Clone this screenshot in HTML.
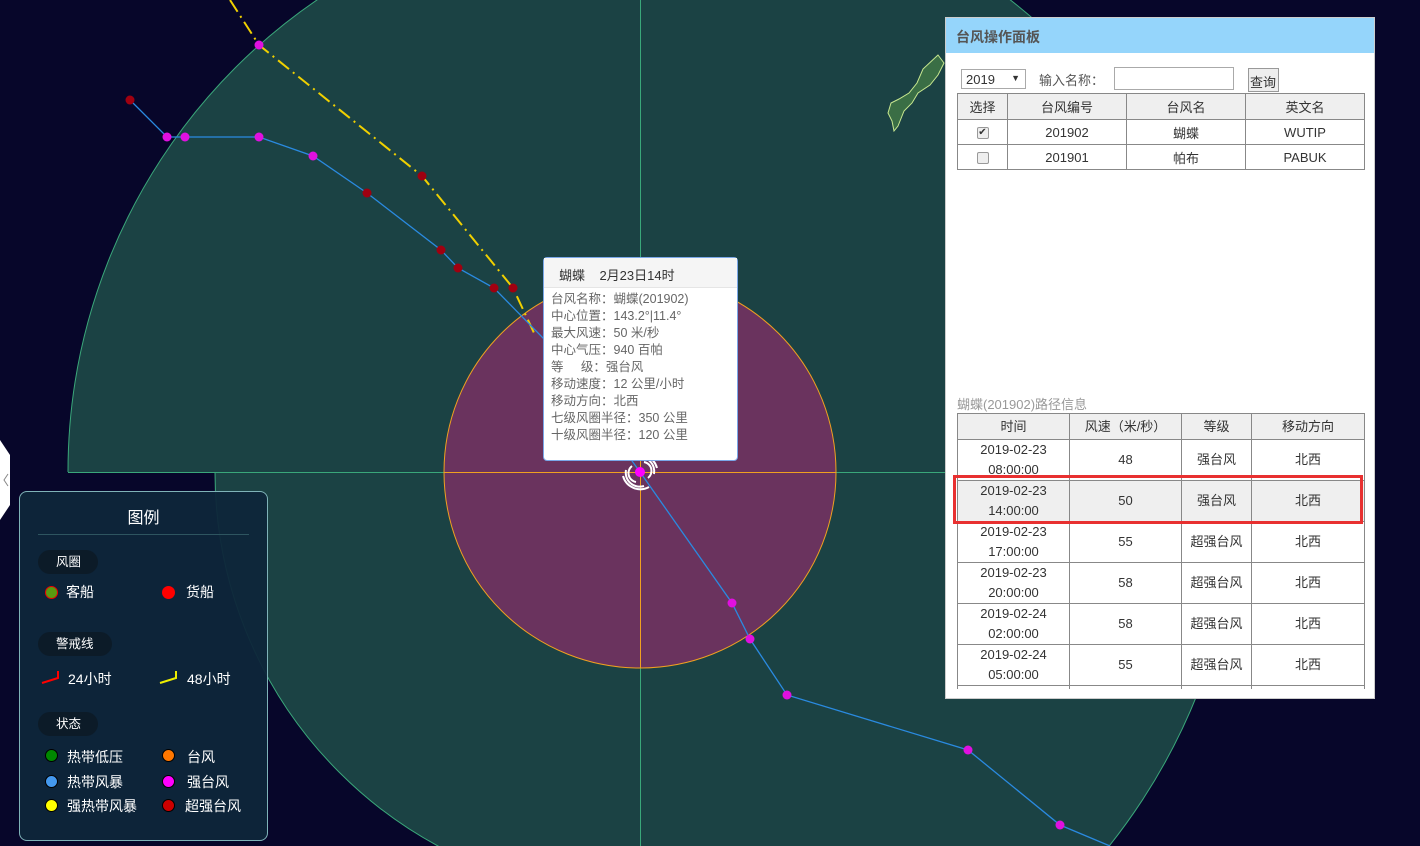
<!DOCTYPE html>
<html><head><meta charset="utf-8"><style>
*{margin:0;padding:0;box-sizing:border-box}
html,body{width:1420px;height:846px;overflow:hidden}
body{background:#07062a;font-family:"Liberation Sans","Noto Sans CJK SC",sans-serif;position:relative}
svg.map{position:absolute;left:0;top:0}
.tip{position:absolute;left:543px;top:257px;width:195px;height:204px;background:#fff;border:1px solid #7aa7e8;border-radius:4px;font-size:12.5px;color:#666}
.tip .h{height:30px;background:#f5f5f5;border-bottom:1px solid #e5e5e5;padding:7px 0 0 15px;color:#333;font-size:13px}
.tip .b{padding:3px 0 0 7px;line-height:17px}
.legend{position:absolute;left:19px;top:491px;width:249px;height:350px;border:1px solid #7fb3b8;border-radius:8px;background:rgba(14,38,58,.95);color:#fff;font-size:14px}
.legend .t{text-align:center;font-size:16px;margin-top:12px;padding-bottom:6px;border-bottom:1px solid #2e5560;margin-left:18px;margin-right:18px}
.pill{position:absolute;left:18px;height:24px;border-radius:12px;background:#0c1b28;font-size:12.5px;line-height:24px;padding-left:18px}
.it{position:absolute;font-size:14px;line-height:16px}
.dot{position:absolute;width:13px;height:13px;border-radius:50%;border:1px solid #000}
.panel{position:absolute;left:945px;top:17px;width:430px;height:682px;background:#fff;border:1px solid #ccc;overflow:hidden}
.panel .hd{height:35px;background:#95d5fb;color:#555;font-weight:bold;font-size:14px;padding:9px 0 0 10px}
table{border-collapse:collapse;position:absolute;left:11px;font-size:13px;color:#333;text-align:center}
td,th{border:1px solid #888;font-weight:normal}
th{background:#efefef;height:26px}
.cb{display:inline-block;width:12px;height:12px;border:1px solid #999;border-radius:2px;background:#eee;vertical-align:middle;font-size:10px;line-height:10px}
</style></head><body>
<svg class="map" width="1420" height="846">
<defs><clipPath id="ul"><rect x="0" y="0" width="640" height="472"/></clipPath>
<clipPath id="ll"><rect x="0" y="472" width="640" height="400"/></clipPath>
<clipPath id="r"><rect x="640" y="0" width="800" height="846"/></clipPath></defs>
<circle cx="640" cy="472" r="572" fill="#1b4244" stroke="#3aa77a" clip-path="url(#ul)"/>
<circle cx="640" cy="472" r="425" fill="#1b4244" stroke="#3aa77a" clip-path="url(#ll)"/>
<circle cx="640" cy="472" r="600" fill="#1b4244" stroke="#3aa77a" clip-path="url(#r)"/>
<line x1="68" y1="472.5" x2="1000" y2="472.5" stroke="#3aa77a"/>
<line x1="640.5" y1="0" x2="640.5" y2="846" stroke="#3aa77a"/>
<circle cx="640" cy="472" r="196" fill="#6a335e" stroke="#f0a020"/>
<line x1="444" y1="472.5" x2="836" y2="472.5" stroke="#f0a020"/>
<line x1="640.5" y1="276" x2="640.5" y2="668" stroke="#f0a020"/>
<path d="M938 55 l6 8 l-6 12 l-8 10 l-12 8 l-6 10 l-8 8 l-6 15 l-4 5 l-2 -10 l-4 -8 l3 -10 l8 -4 l10 -6 l8 -10 l6 -14z" fill="#3a6e45" stroke="#c8e890" stroke-width="1"/>
<polyline points="230,0 259,45 422,176 513,288 535,335" fill="none" stroke="#f0d000" stroke-width="2" stroke-dasharray="14,5,2,5"/>
<polyline points="130,100 167,137 185,137 259,137 313,156 367,193 441,250 458,268 494,288 545,340 640,472 732,603 750,639 787,695 968,750 1060,825 1110,846" fill="none" stroke="#2a8ae0" stroke-width="1.3"/>
<g fill="#a00010"><circle cx="130" cy="100" r="4.5"/><circle cx="367" cy="193" r="4.5"/><circle cx="441" cy="250" r="4.5"/><circle cx="458" cy="268" r="4.5"/><circle cx="494" cy="288" r="4.5"/><circle cx="422" cy="176" r="4.5"/><circle cx="513" cy="288" r="4.5"/></g>
<g fill="#e010e0"><circle cx="167" cy="137" r="4.5"/><circle cx="185" cy="137" r="4.5"/><circle cx="259" cy="137" r="4.5"/><circle cx="313" cy="156" r="4.5"/><circle cx="259" cy="45" r="4.5"/><circle cx="732" cy="603" r="4.5"/><circle cx="750" cy="639" r="4.5"/><circle cx="787" cy="695" r="4.5"/><circle cx="968" cy="750" r="4.5"/><circle cx="1060" cy="825" r="4.5"/></g>
<g fill="none" stroke="#fff" stroke-width="2"><path d="M632 466 a9 9 0 0 0 4 16"/><path d="M648 478 a9 9 0 0 0 -4 -16"/><path d="M626 470 a14 14 0 0 0 18 16"/><path d="M654 474 a14 14 0 0 0 -18 -16"/><path d="M623 476 a18 18 0 0 0 26 11"/><path d="M657 468 a18 18 0 0 0 -26 -11"/></g>
<circle cx="640" cy="472" r="5" fill="#f0f"/>
<path d="M0 440 l10 15 v50 l-10 15z" fill="#fff"/>
<path d="M8 474 l-4 6 l4 6" stroke="#888" fill="none"/>
</svg>
<div class="tip"><div class="h">蝴蝶&nbsp;&nbsp;&nbsp;&nbsp;2月23日14时</div><div class="b">台风名称：蝴蝶(201902)<br>中心位置：143.2°|11.4°<br>最大风速：50 米/秒<br>中心气压：940 百帕<br>等&nbsp;&nbsp;&nbsp;&nbsp;&nbsp;级：强台风<br>移动速度：12 公里/小时<br>移动方向：北西<br>七级风圈半径：350 公里<br>十级风圈半径：120 公里</div></div>
<div class="legend"><div class="t">图例</div>
<div class="pill" style="top:58px;width:60px">风圈</div>
<div class="dot" style="left:25px;top:94px;background:#5a9a10;border-color:#e00"></div><div class="it" style="left:46px;top:92px">客船</div>
<div class="dot" style="left:142px;top:94px;background:#f00;border-color:#f00"></div><div class="it" style="left:166px;top:92px">货船</div>
<div class="pill" style="top:140px;width:74px">警戒线</div>
<svg style="position:absolute;left:21px;top:178px" width="20" height="16"><polyline points="1,13 17,8 17,1" fill="none" stroke="#f00" stroke-width="2"/></svg><div class="it" style="left:48px;top:179px">24小时</div>
<svg style="position:absolute;left:139px;top:178px" width="20" height="16"><polyline points="1,13 17,8 17,1" fill="none" stroke="#ee0" stroke-width="2"/></svg><div class="it" style="left:167px;top:179px">48小时</div>
<div class="pill" style="top:220px;width:60px">状态</div>
<div class="dot" style="left:25px;top:257px;background:#080"></div><div class="it" style="left:47px;top:257px">热带低压</div>
<div class="dot" style="left:142px;top:257px;background:#f70"></div><div class="it" style="left:167px;top:257px">台风</div>
<div class="dot" style="left:25px;top:283px;background:#49e"></div><div class="it" style="left:47px;top:282px">热带风暴</div>
<div class="dot" style="left:142px;top:283px;background:#f0f"></div><div class="it" style="left:167px;top:282px">强台风</div>
<div class="dot" style="left:25px;top:307px;background:#ff0"></div><div class="it" style="left:47px;top:306px">强热带风暴</div>
<div class="dot" style="left:142px;top:307px;background:#c00"></div><div class="it" style="left:165px;top:306px">超强台风</div>
</div>
<div class="panel"><div class="hd">台风操作面板</div>
<div style="position:absolute;left:15px;top:51px;width:65px;height:20px;border:1px solid #aaa;font-size:13px;padding:2px 4px;color:#333">2019<span style="position:absolute;right:5px;font-size:9px;top:3px">▼</span></div>
<div style="position:absolute;left:93px;top:52px;font-size:13px;color:#555">输入名称：</div>
<div style="position:absolute;left:168px;top:49px;width:120px;height:23px;border:1px solid #aaa"></div>
<div style="position:absolute;left:302px;top:50px;width:31px;height:24px;border:1px solid #999;background:#eee;font-size:13px;padding:3px 1px;color:#333">查询</div>
<table style="top:75px;width:408px"><tr><th style="width:50px">选择</th><th style="width:119px">台风编号</th><th style="width:119px">台风名</th><th>英文名</th></tr>
<tr style="height:25px"><td><span class="cb">✔</span></td><td>201902</td><td>蝴蝶</td><td>WUTIP</td></tr>
<tr style="height:25px"><td><span class="cb"></span></td><td>201901</td><td>帕布</td><td>PABUK</td></tr></table>
<div style="position:absolute;left:11px;top:376px;font-size:13px;color:#999">蝴蝶(201902)路径信息</div>
<div style="position:absolute;left:11px;top:395px;width:408px;height:276px;overflow:hidden">
<table style="left:0;top:0;width:408px;line-height:20px"><tr><th style="width:112px">时间</th><th style="width:112px">风速（米/秒）</th><th style="width:70px">等级</th><th>移动方向</th></tr>
<tr style="height:41px"><td>2019-02-23<br>08:00:00</td><td>48</td><td>强台风</td><td>北西</td></tr>
<tr style="height:41px;background:#efefef"><td>2019-02-23<br>14:00:00</td><td>50</td><td>强台风</td><td>北西</td></tr>
<tr style="height:41px"><td>2019-02-23<br>17:00:00</td><td>55</td><td>超强台风</td><td>北西</td></tr>
<tr style="height:41px"><td>2019-02-23<br>20:00:00</td><td>58</td><td>超强台风</td><td>北西</td></tr>
<tr style="height:41px"><td>2019-02-24<br>02:00:00</td><td>58</td><td>超强台风</td><td>北西</td></tr>
<tr style="height:41px"><td>2019-02-24<br>05:00:00</td><td>55</td><td>超强台风</td><td>北西</td></tr>
<tr style="height:41px"><td>&nbsp;</td><td></td><td></td><td></td></tr></table></div>
<div style="position:absolute;left:7px;top:457px;width:410px;height:49px;border:3px solid #e83030"></div>
</div>
</body></html>
